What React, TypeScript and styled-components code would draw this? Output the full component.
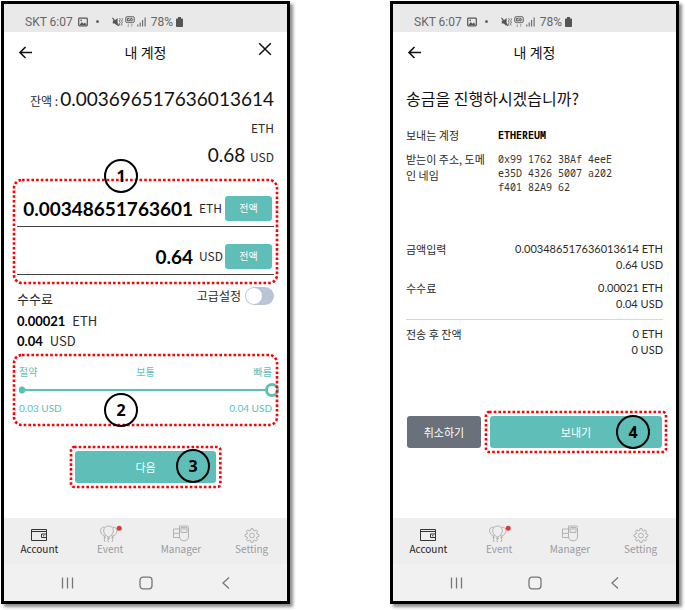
import React, { useState } from "react";
import styled, { createGlobalStyle } from "styled-components";

const teal = "#60beb8";
const cjk = '"Noto Sans CJK KR", "Noto Sans", sans-serif';
const lato = 'Lato, "Noto Sans CJK KR", sans-serif';
const mono = '"Noto Sans Mono", "DejaVu Sans Mono", monospace';

const GlobalStyle = createGlobalStyle`
  *, *::before, *::after { box-sizing: border-box; }
  body { margin: 0; background: #fff; color: #2a2a2a; font-family: ${cjk}; font-size: 11px; line-height: 16px; }
  h1, h2, p, dl, dd, dt { margin: 0; font-weight: 400; }
  button, input { font: inherit; color: inherit; }
`;

const Page = styled.main`
  display: grid;
  grid-template-columns: 1fr 1fr;
  gap: 100px;
  min-height: 100vh;
  padding: 1px 6px 6px 1px;
`;

const Phone = styled.section`
  display: flex;
  flex-direction: column;
  min-width: 0;
  border: 3px solid #000;
  background: #fff;
  box-shadow: 3px 3px 3px rgba(0, 0, 0, 0.45);
`;

const StatusBar = styled.div`
  display: flex;
  align-items: center;
  height: 28px;
  padding: 7px 21px 0;
  gap: 5px;
  background: #e9e9e9;
  color: #666;
  font: 12px/16px Roboto, sans-serif;
`;

const StatusIcons = styled.span`
  display: flex;
  align-items: center;
  gap: 2px;
  margin-left: 8px;
`;

const Bullet = styled.span`
  width: 3px;
  height: 3px;
  margin-left: 3px;
  border-radius: 50%;
  background: #666;
`;

const Battery = styled.svg`
  margin-left: -2px;
`;

const Header = styled.header`
  display: grid;
  grid-template-columns: 16px 1fr 16px;
  align-items: center;
  height: 40px;
  padding: 0 13px;
  color: #111;
`;

const Title = styled.h1`
  text-align: center;
  font-size: 14px;
  line-height: 20px;
`;

const IconButton = styled.button<{ $raised?: boolean }>`
  display: flex;
  align-self: ${(p) => (p.$raised ? "start" : "center")};
  padding: ${(p) => (p.$raised ? "10px 0 0" : "0")};
  border: 0;
  background: none;
`;

const Content = styled.div`
  display: flex;
  flex: 1;
  flex-direction: column;
  padding: 0 13px;
`;

const Balance = styled.div`
  display: flex;
  flex-direction: column;
  align-items: flex-end;
  padding-top: 13px;
  font-size: 12px;
`;

const BalanceLine = styled.p<{ $tall?: boolean }>`
  display: flex;
  align-items: baseline;
  gap: 2px;
  line-height: ${(p) => (p.$tall ? "28px" : "26px")};
  white-space: nowrap;
`;

const Big = styled.span`
  font-family: ${lato};
  font-size: 19px;
  color: #111;
`;

const Marked = styled.div`
  position: relative;
`;

const Outline = styled.svg<{ $x: number; $top: number; $bottom: number }>`
  position: absolute;
  top: ${(p) => -p.$top}px;
  left: ${(p) => -p.$x}px;
  width: calc(100% + ${(p) => 2 * p.$x}px);
  height: calc(100% + ${(p) => p.$top + p.$bottom}px);
  overflow: visible;
  pointer-events: none;
`;

const Badge = styled.span<{ $left: string; $top: string }>`
  position: absolute;
  left: ${(p) => p.$left};
  top: ${(p) => p.$top};
  display: flex;
  align-items: center;
  justify-content: center;
  width: 34px;
  height: 34px;
  border: 2px solid #000;
  border-radius: 50%;
  color: #000;
  font: 700 16px/20px "Noto Sans", sans-serif;
  pointer-events: none;
`;

const AmountBox = styled(Marked)`
  margin-top: 8px;
`;

const AmountRow = styled.label`
  display: grid;
  grid-template-columns: 1fr 20px 47px;
  align-items: center;
  column-gap: 6px;
  height: 48px;
  padding: 11px 2px 0 0;
  border-bottom: 1px solid #444;
  font-size: 12px;
`;

const AmountInput = styled.input`
  width: 100%;
  min-width: 0;
  height: 26px;
  padding: 0;
  border: 0;
  outline: 0;
  background: none;
  text-align: right;
  font-family: ${lato};
  font-size: 19px;
  font-weight: 700;
  color: #000;
`;

const Button = styled.button<{ $tone?: "grey"; $small?: boolean }>`
  width: 100%;
  height: ${(p) => (p.$small ? "25px" : "32px")};
  padding: 0;
  border: 0;
  border-radius: 3px;
  background: ${(p) => (p.$tone === "grey" ? "#6b717b" : teal)};
  color: #fff;
  font-size: ${(p) => (p.$small ? "10px" : "11px")};
`;

const Fee = styled.div`
  display: flex;
  justify-content: space-between;
  align-items: flex-start;
  padding-top: 11px;
`;

const FeeList = styled.div`
  font-size: 13px;
  line-height: 20px;
`;

const FeeTitle = styled.h2`
  font-size: 13px;
  line-height: 25px;
`;

const Strong = styled.strong`
  margin-right: 7px;
  font-family: ${lato};
  font-weight: 700;
  color: #000;
`;

const SwitchLabel = styled.label`
  display: flex;
  align-items: center;
  gap: 4px;
  font-size: 12px;
  line-height: 20px;
`;

const Switch = styled.input`
  appearance: none;
  display: flex;
  align-items: center;
  width: 29px;
  height: 18px;
  margin: 0;
  padding: 1px;
  border-radius: 9px;
  background: #b9c4d4;
  &::before {
    content: "";
    width: 16px;
    height: 16px;
    border-radius: 50%;
    background: #fff;
  }
  &:checked { background: ${teal}; justify-content: flex-end; }
`;

const SpeedBox = styled(Marked)`
  margin-top: 8px;
  padding: 6px 2px;
  color: ${teal};
  font-size: 10px;
`;

const Ends = styled.div<{ $latin?: boolean }>`
  display: flex;
  justify-content: space-between;
  line-height: 14px;
  font-family: ${(p) => (p.$latin ? lato : cjk)};
`;

const Range = styled.input`
  appearance: none;
  display: block;
  width: calc(100% + 7px);
  height: 14px;
  margin: 4px 0;
  background:
    radial-gradient(circle at 3px 7px, ${teal} 3px, transparent 4px),
    linear-gradient(${teal}, ${teal}) 0 50% / calc(100% - 12px) 2px no-repeat;
  &::-webkit-slider-thumb {
    appearance: none;
    width: 14px;
    height: 14px;
    border: 3px solid ${teal};
    border-radius: 50%;
    background: #fff;
  }
`;

const NextWrap = styled(Marked)`
  width: 55%;
  margin: 30px auto 24px;
`;

const TabBar = styled.nav`
  display: grid;
  grid-template-columns: repeat(4, 1fr);
  height: 46px;
  background: #eee;
`;

const Tab = styled.a<{ $active?: boolean }>`
  display: flex;
  flex-direction: column;
  align-items: center;
  padding-top: 7px;
  color: ${(p) => (p.$active ? "#222" : "#9a9aa2")};
  font-size: 10px;
  line-height: 12px;
  text-decoration: none;
`;

const SystemBar = styled.div`
  display: flex;
  align-items: center;
  justify-content: center;
  gap: 65px;
  height: 37px;
  background: #f1f1f1;
`;

const Question = styled.h2`
  padding-top: 14px;
  font-size: 16px;
  line-height: 24px;
  color: #111;
`;

const Details = styled.dl`
  display: grid;
  grid-template-columns: 82px 1fr;
  column-gap: 10px;
  row-gap: 8px;
  margin-top: 17px;
`;

const Code = styled.dd<{ $bold?: boolean }>`
  max-width: 120px;
  padding-top: 1px;
  font-family: ${mono};
  font-size: 10px;
  line-height: 14px;
  font-weight: ${(p) => (p.$bold ? 700 : 400)};
  color: ${(p) => (p.$bold ? "#000" : "#333")};
`;

const Totals = styled.dl`
  display: flex;
  flex-direction: column;
  gap: 7px;
  margin-top: 47px;
`;

const TotalRow = styled.div<{ $ruled?: boolean }>`
  display: flex;
  justify-content: space-between;
  padding-top: ${(p) => (p.$ruled ? "6px" : "0")};
  border-top: ${(p) => (p.$ruled ? "1px solid #d8d8d8" : "0")};
`;

const TotalValue = styled.dd`
  font-family: ${lato};
  text-align: right;
`;

const Actions = styled.div`
  display: grid;
  grid-template-columns: 74px 1fr;
  gap: 9px;
  margin: 58px 0 24px;
  padding: 0 1px;
`;

const BackIcon = () => (
  <svg width="16" height="14" viewBox="0 0 16 14" fill="none" stroke="#111" strokeWidth="1.6">
    <path d="M15 7.5H3.2M8.5 2 3 7.5 8.5 13" />
  </svg>
);

const CloseIcon = () => (
  <svg width="14" height="14" viewBox="0 0 14 14" fill="none" stroke="#111" strokeWidth="1.5">
    <path d="M1.2 1.2 12.8 12.8M12.8 1.2 1.2 12.8" />
  </svg>
);

const Status = () => (
  <StatusBar>
    <span>SKT 6:07</span>
    <svg width="10" height="10" viewBox="0 0 10 10" fill="none" stroke="#555">
      <rect x=".7" y="1.2" width="8.6" height="7.6" rx=".8" strokeWidth="1.2" />
      <path d="M1.5 8 3.8 5 5.4 6.8 7 5.5 8.6 8Z" fill="#555" stroke="none" />
      <circle cx="3.2" cy="3.4" r=".8" fill="#555" stroke="none" />
    </svg>
    <Bullet />
    <StatusIcons>
      <svg width="11" height="10" viewBox="0 0 11 10" fill="none" stroke="#555" strokeWidth="1">
        <path d="M.8 3.4H2.6L5.6 1V9L2.6 6.6H.8Z" fill="#555" stroke="none" />
        <path d="M.4.8 7 8.8" strokeWidth="1.2" />
        <path d="M7.6 1.2 8.2 2.6 7.4 4 8.2 5.4 7.4 6.8 8 8.4M10 1.2 10.4 2.6 9.6 4 10.4 5.4 9.6 6.8 10 8.4" strokeWidth=".8" />
      </svg>
      <svg width="10" height="12" viewBox="0 0 10 12" fill="none" stroke="#666" strokeWidth=".9">
        <rect x=".6" y=".6" width="8.8" height="6" rx="1.6" fill="#ccc" />
        <path d="M4.4 2.5H2.5V4.8H4.4V3.8M5.8 2.5V4.8H6.6L7.6 3.7 6.6 2.5Z" stroke="#444" strokeWidth=".8" />
        <path d="M3.4 7.8V11M2.4 9.8 3.4 11M6.6 11V7.8L7.6 9" stroke="#aaa" />
      </svg>
      <svg width="9" height="10" viewBox="0 0 9 10" fill="none" stroke="#666" strokeWidth="1.1">
        <path d="M.8 7.5V9.5M3.2 5.5V9.5M5.6 3V9.5M8.1.5V9.5" />
      </svg>
    </StatusIcons>
    <span>78%</span>
    <Battery width="7" height="10" viewBox="0 0 7 10" fill="#555">
      <path d="M2 0H5V1.4H6.2Q7 1.4 7 2.2V9.2Q7 10 6.2 10H.8Q0 10 0 9.2V2.2Q0 1.4.8 1.4H2Z" />
    </Battery>
  </StatusBar>
);

const WalletIcon = () => (
  <svg width="18" height="18" viewBox="0 0 18 18" fill="none" stroke="#333" strokeWidth="1">
    <path d="M1.5 4.5H16.5V15.5H1.5Z" />
    <path d="M1.5 6.5H16.5M16.5 9H11.5V12.5H16.5" />
    <path d="M13 10.8H14.4" />
  </svg>
);

const BalloonIcon = () => (
  <svg width="24" height="18" viewBox="0 0 24 18" fill="none" stroke="#aaa" strokeWidth=".9">
    <path d="M10.5 1C7.6 1 5.6 3 5.6 5.8 5.6 8.4 8 11 10.5 12.2 13 11 15.4 8.4 15.4 5.8 15.4 3 13.4 1 10.5 1Z" />
    <path d="M6.6 2.4C4 1.6 2.4 3.6 2.6 6 2.8 8.4 4.6 10.4 6.8 11L7.8 10.4M14.6 2.4C17 1.8 19.2 3.2 19 6 18.8 8.6 16.8 10.6 14.4 11L13.4 10.4" />
    <path d="M10.5 12.2 9.5 13.6H11.5ZM6.8 11 5.8 12.4H7.8M14.4 11 15.4 12.4H13.4M6.8 12.4Q5.8 14.5 7 17M10.5 13.6Q9.4 15.5 10.6 17.4M14.4 12.4Q15.4 14.5 14 17" />
    <circle cx="21.2" cy="3.2" r="2.5" fill="#db3a34" stroke="none" />
  </svg>
);

const ManagerIcon = () => (
  <svg width="18" height="18" viewBox="0 0 18 18" fill="none" stroke="#aaa" strokeWidth=".9">
    <path d="M7.5 1H15Q16.5 1 16.5 2.5V11Q16.5 15.8 12 15.8 7.5 15.8 7.5 11Z" />
    <path d="M7.5 4H1.5V12.5H7.6M1.5 8.3H7.5M9 2.6H15V7.4H9Z" />
    <path d="M10.2 4H13.8" />
  </svg>
);

const toothAngles = [0, 45, 90, 135, 180, 225, 270, 315];

const GearIcon = () => (
  <svg width="16" height="18" viewBox="0 0 16 18" fill="none" stroke="#aaa" strokeWidth=".9">
    <g transform="translate(8 10.5)">
      {toothAngles.map((angle) => (
        <path key={angle} transform={`rotate(${angle})`} d="M-2.2-4.7-1.4-5.1-1-6.9H1L1.4-5.1 2.2-4.7" />
      ))}
      <circle r="2.4" />
    </g>
  </svg>
);

const BottomBars = () => (
  <>
    <TabBar>
      <Tab href="#account" $active><WalletIcon />Account</Tab>
      <Tab href="#event"><BalloonIcon />Event</Tab>
      <Tab href="#manager"><ManagerIcon />Manager</Tab>
      <Tab href="#setting"><GearIcon />Setting</Tab>
    </TabBar>
    <SystemBar>
      <IconButton aria-label="Recent apps">
        <svg width="14" height="14" viewBox="0 0 14 14" stroke="#777" strokeWidth="1.3">
          <path d="M2.5 1.5V12.5M7.5 1.5V12.5M12.5 1.5V12.5" />
        </svg>
      </IconButton>
      <IconButton aria-label="Home">
        <svg width="14" height="14" viewBox="0 0 14 14" fill="none" stroke="#777" strokeWidth="1.3">
          <rect x="1" y="1.2" width="12" height="11.6" rx="3" />
        </svg>
      </IconButton>
      <IconButton aria-label="Back">
        <svg width="14" height="14" viewBox="0 0 14 14" fill="none" stroke="#777" strokeWidth="1.3">
          <path d="M11 1.5 5 7 11 12.5" />
        </svg>
      </IconButton>
    </SystemBar>
  </>
);

const RedDots = ({ x, top, bottom, r }: { x: number; top: number; bottom: number; r: number }) => (
  <Outline $x={x} $top={top} $bottom={bottom} aria-hidden="true">
    <rect width="100%" height="100%" rx={r} fill="none" stroke="#fb0007" strokeWidth="2.6" strokeDasharray="2.6 2.1" />
  </Outline>
);

const SendScreen = () => {
  const [eth, setEth] = useState("0.00348651763601");
  const [usd, setUsd] = useState("0.64");
  const [advanced, setAdvanced] = useState(false);
  const [speed, setSpeed] = useState(100);
  return (
    <Phone>
      <Status />
      <Header>
        <IconButton aria-label="뒤로"><BackIcon /></IconButton>
        <Title>내 계정</Title>
        <IconButton aria-label="닫기" $raised><CloseIcon /></IconButton>
      </Header>
      <Content>
        <Balance>
          <BalanceLine $tall><span>잔액 :</span><Big>0.003696517636013614</Big></BalanceLine>
          <BalanceLine>ETH</BalanceLine>
          <BalanceLine $tall><Big>0.68</Big><span>&nbsp;USD</span></BalanceLine>
        </Balance>
        <AmountBox>
          <AmountRow>
            <AmountInput aria-label="ETH" value={eth} onChange={(e) => setEth(e.target.value)} />
            <span>ETH</span>
            <Button type="button" $small>전액</Button>
          </AmountRow>
          <AmountRow>
            <AmountInput aria-label="USD" value={usd} onChange={(e) => setUsd(e.target.value)} />
            <span>USD</span>
            <Button type="button" $small>전액</Button>
          </AmountRow>
          <RedDots x={3} top={-1} bottom={8} r={8} />
          <Badge $left="87px" $top="-20px">1</Badge>
        </AmountBox>
        <Fee>
          <FeeList>
            <FeeTitle>수수료</FeeTitle>
            <p><Strong>0.00021</Strong>ETH</p>
            <p><Strong>0.04</Strong>USD</p>
          </FeeList>
          <SwitchLabel>
            고급설정
            <Switch type="checkbox" role="switch" checked={advanced} onChange={(e) => setAdvanced(e.target.checked)} />
          </SwitchLabel>
        </Fee>
        <SpeedBox>
          <Ends><span>절약</span><span>보통</span><span>빠름</span></Ends>
          <Range type="range" aria-label="수수료 속도" value={speed} onChange={(e) => setSpeed(Number(e.target.value))} />
          <Ends $latin><span>0.03 USD</span><span>0.04 USD</span></Ends>
          <RedDots x={3} top={4} bottom={4} r={8} />
          <Badge $left="87px" $top="34px">2</Badge>
        </SpeedBox>
        <NextWrap>
          <Button type="button">다음</Button>
          <RedDots x={4} top={4} bottom={4} r={3} />
          <Badge $left="calc(100% - 40px)" $top="-2px">3</Badge>
        </NextWrap>
      </Content>
      <BottomBars />
    </Phone>
  );
};

const ConfirmScreen = () => (
  <Phone>
    <Status />
    <Header>
      <IconButton aria-label="뒤로"><BackIcon /></IconButton>
      <Title>내 계정</Title>
    </Header>
    <Content>
      <Question>송금을 진행하시겠습니까?</Question>
      <Details>
        <dt>보내는 계정</dt>
        <Code $bold>ETHEREUM</Code>
        <dt>받는이 주소, 도메인 네임</dt>
        <Code>0x99 1762 3BAf 4eeE e35D 4326 5007 a202 f401 82A9 62</Code>
      </Details>
      <Totals>
        <TotalRow>
          <dt>금액입력</dt>
          <TotalValue>0.003486517636013614 ETH<br />0.64 USD</TotalValue>
        </TotalRow>
        <TotalRow>
          <dt>수수료</dt>
          <TotalValue>0.00021 ETH<br />0.04 USD</TotalValue>
        </TotalRow>
        <TotalRow $ruled>
          <dt>전송 후 잔액</dt>
          <TotalValue>0 ETH<br />0 USD</TotalValue>
        </TotalRow>
      </Totals>
      <Actions>
        <Button type="button" $tone="grey">취소하기</Button>
        <Marked>
          <Button type="button">보내기</Button>
          <RedDots x={4} top={4} bottom={4} r={3} />
          <Badge $left="calc(100% - 46px)" $top="-1px">4</Badge>
        </Marked>
      </Actions>
    </Content>
    <BottomBars />
  </Phone>
);

export default function App() {
  return (
    <>
      <GlobalStyle />
      <Page>
        <SendScreen />
        <ConfirmScreen />
      </Page>
    </>
  );
}
